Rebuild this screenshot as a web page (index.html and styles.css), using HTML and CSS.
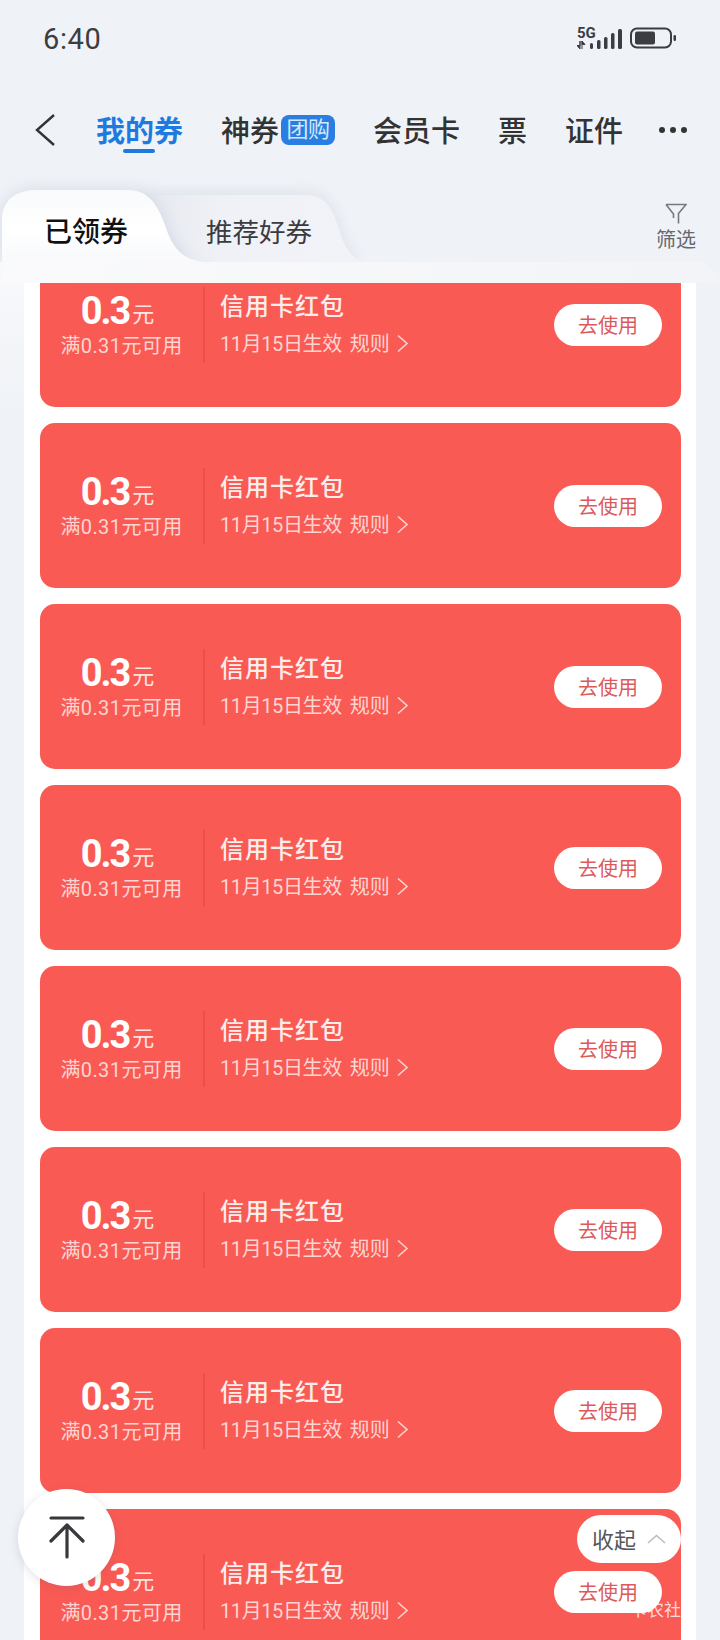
FILE: index.html
```html
<!DOCTYPE html>
<html lang="zh-CN">
<head>
<meta charset="utf-8">
<title>我的券</title>
<link rel="stylesheet" href="styles.css">
</head>
<body>
<div class="page">
  <header class="status">
    <span class="time">6:40</span>
    <div class="status-icons">
      <div class="net">
        <span class="net-label">5G</span>
        <svg class="net-arrows" width="11" height="8" viewBox="0 0 11 8"><path d="M3 0V8L0 4.5H3ZM5 0L8 3.5H5ZM5 0V8" fill="#3c3d42" stroke="#3c3d42" stroke-width="1"/></svg>
      </div>
      <svg class="bars" width="33" height="20" viewBox="0 0 33 20"><g fill="#3c3d42"><rect x="0" y="14" width="3" height="6" rx="1.5"/><rect x="7" y="11" width="3.5" height="9" rx="1.5"/><rect x="14" y="8" width="3.5" height="12" rx="1.5"/><rect x="21" y="4" width="3.5" height="16" rx="1.5"/><rect x="28" y="0" width="4" height="20" rx="1.5"/></g></svg>
      <svg class="battery" width="46" height="22" viewBox="0 0 46 22"><rect x="1" y="1.5" width="40" height="19" rx="6" fill="none" stroke="#3c3d42" stroke-width="2"/><rect x="5" y="4.5" width="20" height="13" rx="2" fill="#3c3d42"/><rect x="43.5" y="8" width="2.5" height="6" rx="1.2" fill="#3c3d42"/></svg>
    </div>
  </header>

  <nav class="nav">
    <svg class="back" width="22" height="34" viewBox="0 0 22 34"><path d="M20 2L3 17L20 32" fill="none" stroke="#333" stroke-width="2.4"/></svg>
    <a class="nav-item active">我的券</a>
    <a class="nav-item group">神券<span class="badge">团购</span></a>
    <a class="nav-item">会员卡</a>
    <a class="nav-item">票</a>
    <a class="nav-item">证件</a>
    <span class="more"><i></i><i></i><i></i></span>
  </nav>

  <section class="tabs">
    <svg class="tab-shapes" width="720" height="72" viewBox="0 0 720 72">
      <defs>
        <linearGradient id="t1" x1="0" y1="0" x2="0" y2="1"><stop offset="0" stop-color="#f9fafc"/><stop offset=".55" stop-color="#ffffff"/><stop offset="1" stop-color="#f8f9fb"/></linearGradient>
        <linearGradient id="t2" x1="0" y1="0" x2="1" y2="0"><stop offset="0" stop-color="#e6e8f0"/><stop offset=".35" stop-color="#eff1f6"/><stop offset="1" stop-color="#f1f3f8"/></linearGradient>
      </defs>
      <path class="shape-back" d="M140 5H306C324 5 332 16 338 36C343 54 350 68 362 72H190Z" fill="url(#t2)"/>
      <path class="shape-front" d="M2 72V30C2 10 16 0 36 0H128C148 0 158 14 166 38C173 60 186 72 208 72Z" fill="url(#t1)"/>
    </svg>
    <span class="tab current">已领券</span>
    <span class="tab">推荐好券</span>
    <div class="filter">
      <svg width="22" height="21" viewBox="0 0 22 21"><path d="M1 1.5H21L13.5 10.5V20.5M1 1.5L8.5 11V15" fill="none" stroke="#77797f" stroke-width="1.6"/></svg>
      <span>筛选</span>
    </div>
  </section>

  <main class="panel">
    <div class="panel-head"></div>
    <div class="scroll">
      <div class="list">
        <article class="card">
          <div class="amount"><p class="value">0.3<small>元</small></p><p class="cond">满0.31元可用</p></div>
          <div class="info"><h3>信用卡红包</h3><p><span class="date">11月15日生效</span><span class="rule">规则</span><svg class="arrow" width="13" height="19" viewBox="0 0 13 19"><path d="M2 1.5L11 9.5L2 17.5" fill="none" stroke="#fbd3d0" stroke-width="1.6"/></svg></p></div>
          <button class="use">去使用</button>
        </article>
        <article class="card">
          <div class="amount"><p class="value">0.3<small>元</small></p><p class="cond">满0.31元可用</p></div>
          <div class="info"><h3>信用卡红包</h3><p><span class="date">11月15日生效</span><span class="rule">规则</span><svg class="arrow" width="13" height="19" viewBox="0 0 13 19"><path d="M2 1.5L11 9.5L2 17.5" fill="none" stroke="#fbd3d0" stroke-width="1.6"/></svg></p></div>
          <button class="use">去使用</button>
        </article>
        <article class="card">
          <div class="amount"><p class="value">0.3<small>元</small></p><p class="cond">满0.31元可用</p></div>
          <div class="info"><h3>信用卡红包</h3><p><span class="date">11月15日生效</span><span class="rule">规则</span><svg class="arrow" width="13" height="19" viewBox="0 0 13 19"><path d="M2 1.5L11 9.5L2 17.5" fill="none" stroke="#fbd3d0" stroke-width="1.6"/></svg></p></div>
          <button class="use">去使用</button>
        </article>
        <article class="card">
          <div class="amount"><p class="value">0.3<small>元</small></p><p class="cond">满0.31元可用</p></div>
          <div class="info"><h3>信用卡红包</h3><p><span class="date">11月15日生效</span><span class="rule">规则</span><svg class="arrow" width="13" height="19" viewBox="0 0 13 19"><path d="M2 1.5L11 9.5L2 17.5" fill="none" stroke="#fbd3d0" stroke-width="1.6"/></svg></p></div>
          <button class="use">去使用</button>
        </article>
        <article class="card">
          <div class="amount"><p class="value">0.3<small>元</small></p><p class="cond">满0.31元可用</p></div>
          <div class="info"><h3>信用卡红包</h3><p><span class="date">11月15日生效</span><span class="rule">规则</span><svg class="arrow" width="13" height="19" viewBox="0 0 13 19"><path d="M2 1.5L11 9.5L2 17.5" fill="none" stroke="#fbd3d0" stroke-width="1.6"/></svg></p></div>
          <button class="use">去使用</button>
        </article>
        <article class="card">
          <div class="amount"><p class="value">0.3<small>元</small></p><p class="cond">满0.31元可用</p></div>
          <div class="info"><h3>信用卡红包</h3><p><span class="date">11月15日生效</span><span class="rule">规则</span><svg class="arrow" width="13" height="19" viewBox="0 0 13 19"><path d="M2 1.5L11 9.5L2 17.5" fill="none" stroke="#fbd3d0" stroke-width="1.6"/></svg></p></div>
          <button class="use">去使用</button>
        </article>
        <article class="card">
          <div class="amount"><p class="value">0.3<small>元</small></p><p class="cond">满0.31元可用</p></div>
          <div class="info"><h3>信用卡红包</h3><p><span class="date">11月15日生效</span><span class="rule">规则</span><svg class="arrow" width="13" height="19" viewBox="0 0 13 19"><path d="M2 1.5L11 9.5L2 17.5" fill="none" stroke="#fbd3d0" stroke-width="1.6"/></svg></p></div>
          <button class="use">去使用</button>
        </article>
        <article class="card">
          <div class="amount"><p class="value">0.3<small>元</small></p><p class="cond">满0.31元可用</p></div>
          <div class="info"><h3>信用卡红包</h3><p><span class="date">11月15日生效</span><span class="rule">规则</span><svg class="arrow" width="13" height="19" viewBox="0 0 13 19"><path d="M2 1.5L11 9.5L2 17.5" fill="none" stroke="#fbd3d0" stroke-width="1.6"/></svg></p></div>
          <button class="use">去使用</button>
          <span class="watermark">卡农社</span>
        </article>
      </div>
    </div>
  </main>

  <button class="to-top" aria-label="回到顶部">
    <svg width="36" height="44" viewBox="0 0 36 44"><path d="M2 2H34M18 9V41M2 25L18 9L34 25" fill="none" stroke="#38393d" stroke-width="3.2" stroke-linecap="round" stroke-linejoin="round"/></svg>
  </button>
  <button class="collapse">收起<svg width="19" height="10" viewBox="0 0 19 10"><path d="M1 9L9.5 1.5L18 9" fill="none" stroke="#bdbdbd" stroke-width="1.6"/></svg></button>
</div>
</body>
</html>
```
FILE: styles.css
```css
* { box-sizing: border-box; }
html, body { margin: 0; padding: 0; }
body {
  background: #eff2f7;
  font-family: Roboto, "Noto Sans CJK SC", sans-serif;
  color: #333;
}
.page {
  position: relative;
  width: 720px;
  height: 1640px;
  overflow: hidden;
  display: flex;
  flex-direction: column;
  background: #eff2f7;
}

/* status bar */
.status {
  height: 78px;
  flex: none;
  display: flex;
  align-items: center;
  justify-content: space-between;
  padding: 0 44px 0 43px;
}
.time {
  font-size: 29px;
  line-height: 34px;
  letter-spacing: .6px;
  color: #3c3d42;
}
.status-icons {
  display: flex;
  align-items: flex-end;
  height: 22px;
  margin-top: -3px;
}
.net {
  width: 14px;
  height: 22px;
  display: flex;
  flex-direction: column;
  align-items: flex-start;
}
.net-label {
  font-size: 15px;
  line-height: 12px;
  font-weight: 700;
  color: #3c3d42;
  white-space: nowrap;
}
.net-arrows { margin-top: 2px; }
.bars { margin-left: -1px; }
.battery { margin-left: 7px; }

/* nav */
.nav {
  height: 104px;
  flex: none;
  display: flex;
  align-items: center;
  gap: 38px;
  padding-left: 34px;
}
.back { margin-right: 2px; }
.nav-item {
  position: relative;
  margin-top: 3px;
  font-size: 29px;
  line-height: 40px;
  font-weight: 500;
  color: #333;
  white-space: nowrap;
}
.nav-item.group { display: flex; align-items: center; gap: 2px; }
.nav-item.active { font-weight: 700; color: #1f7ae0; }
.nav-item.active::after {
  content: "";
  position: absolute;
  left: 27px;
  bottom: -1px;
  width: 32px;
  height: 4px;
  border-radius: 2px;
  background: #1f7ae0;
}
.badge {
  width: 54px;
  height: 30px;
  margin-top: -3px;
  border-radius: 8px;
  background: #2a7de1;
  color: #d4e8fb;
  font-size: 22px;
  font-weight: 400;
  line-height: 30px;
  text-align: center;
  letter-spacing: -.5px;
}
.more {
  display: flex;
  gap: 5px;
  margin-left: -2px;
}
.more i {
  width: 6px;
  height: 6px;
  border-radius: 50%;
  background: #333;
}

/* tabs */
.tabs {
  position: relative;
  height: 72px;
  margin-top: 8px;
  padding: 14px 0 0 44px;
  flex: none;
  display: flex;
  align-items: center;
}
.tab-shapes { position: absolute; left: 0; top: 0; overflow: visible; }
.shape-back { filter: drop-shadow(0 -2px 7px rgba(170,178,200,.28)); }
.shape-front { filter: drop-shadow(0 0 8px rgba(170,178,200,.35)); }
.tab {
  position: relative;
  font-size: 26.5px;
  line-height: 38px;
  color: #3a3b3f;
  margin-left: 78px;
}
.tab.current {
  font-size: 28px;
  font-weight: 500;
  color: #111;
  margin-left: 0;
}
.filter {
  position: absolute;
  right: 24px;
  top: 13px;
  width: 40px;
  display: flex;
  flex-direction: column;
  align-items: center;
  gap: 3px;
  font-size: 20px;
  line-height: 26px;
  color: #66686d;
}

/* panel */
.panel {
  position: relative;
  flex: 1;
  min-height: 0;
  display: flex;
  flex-direction: column;
  background: linear-gradient(#f8f9fb, #eff2f7) no-repeat left top / 24px 150px;
}
.panel-head {
  height: 21px;
  flex: none;
  margin: 0 2px;
  border-top-right-radius: 22px;
  background: linear-gradient(90deg, #fafafc, #f5f6f9 70%, #f2f4f8);
}
.scroll {
  flex: 1;
  min-height: 0;
  margin: 0 24px;
  background: #fff;
  overflow: hidden;
}
.list {
  margin-top: -41px;
  padding: 0 15px 0 16px;
  display: flex;
  flex-direction: column;
  gap: 16px;
}
.card {
  position: relative;
  height: 165px;
  flex: none;
  border-radius: 15px;
  background: #fa5a54;
  display: flex;
  align-items: center;
  color: #fff;
}
.amount {
  width: 165px;
  height: 76px;
  flex: none;
  border-right: 2px solid #e9504b;
  display: flex;
  flex-direction: column;
  align-items: center;
}
.amount p { margin: 0; white-space: nowrap; }
.amount .value {
  font-size: 38px;
  line-height: 42px;
  font-weight: 700;
  letter-spacing: -2px;
  margin: 3px 8px 0 0;
}
.value small {
  font-size: 22px;
  line-height: 1;
  font-weight: 400;
  letter-spacing: 0;
  color: #fde4e2;
  margin-left: 3px;
  vertical-align: 2px;
}
.amount .cond {
  font-size: 20px;
  line-height: 28px;
  letter-spacing: .4px;
  color: #fcd5d2;
  margin-top: 0;
}
.info {
  flex: 1;
  padding: 0 0 2px 15px;
}
.info h3 {
  margin: 0;
  font-size: 24px;
  line-height: 34px;
  font-weight: 500;
  letter-spacing: 1px;
  color: #fdeeec;
}
.info p {
  margin: 6px 0 0;
  font-size: 20px;
  line-height: 28px;
  color: #fcd5d2;
  display: flex;
  align-items: center;
  white-space: nowrap;
}
.date { letter-spacing: -.4px; }
.rule { margin-left: 8px; }
.arrow { margin-left: 6px; }
.use {
  position: relative;
  z-index: 1;
  width: 108px;
  height: 42px;
  margin-right: 19px;
  padding: 2px 0 0;
  border: 0;
  border-radius: 21px;
  background: #fff;
  font-family: inherit;
  font-size: 20px;
  line-height: 40px;
  color: #dd5a5c;
}
.watermark {
  position: absolute;
  right: 0;
  top: 89px;
  font-size: 17px;
  line-height: 24px;
  color: rgba(255,255,255,.78);
}

/* floating */
.to-top {
  position: absolute;
  z-index: 2;
  left: 18px;
  top: 1489px;
  width: 97px;
  height: 97px;
  padding: 0;
  border: 0;
  border-radius: 50%;
  background: #fff;
  box-shadow: 0 2px 10px rgba(90,90,110,.18);
  display: flex;
  align-items: center;
  justify-content: center;
}
.collapse {
  position: absolute;
  z-index: 2;
  left: 577px;
  top: 1515px;
  width: 104px;
  height: 48px;
  padding: 3px 0 0 15px;
  border: 0;
  border-radius: 24px;
  background: #fff;
  font-family: inherit;
  font-size: 22px;
  line-height: 45px;
  color: #55565a;
  display: flex;
  align-items: center;
  gap: 11px;
}
.collapse svg { margin-top: -4px; }
```
